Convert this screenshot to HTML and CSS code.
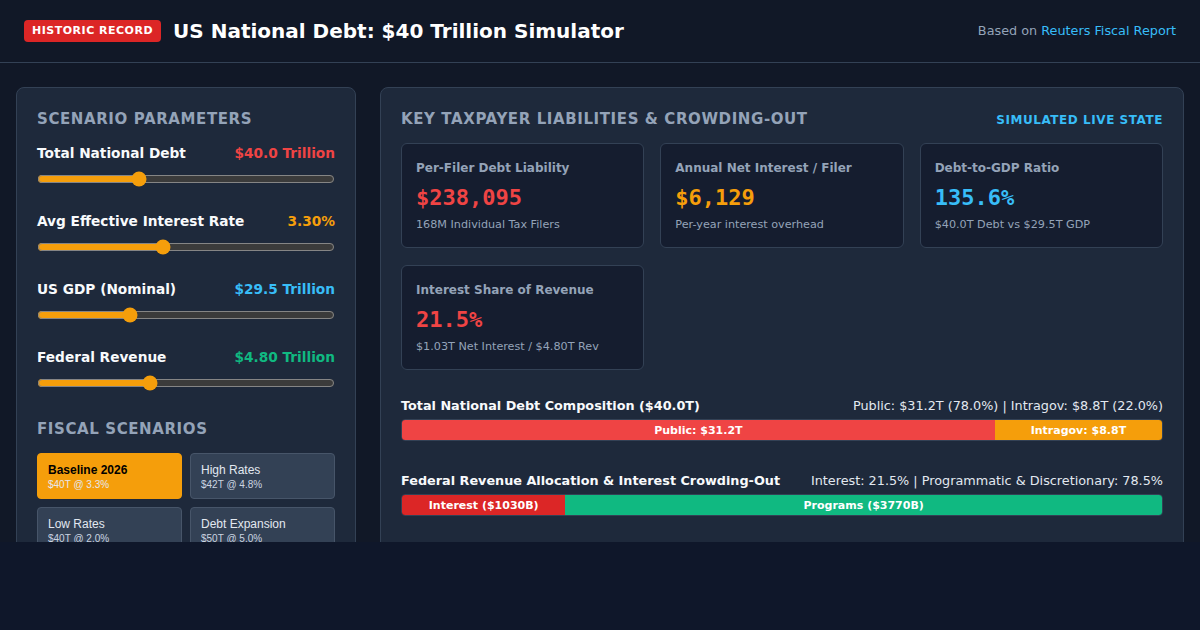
FILE: index.html
```html
<!DOCTYPE html>
<html lang="en">
<head>
    <meta charset="UTF-8">
    <meta name="viewport" content="width=device-width, initial-scale=1.0">
    <title>US National Debt: $40 Trillion Simulator</title>
    <link rel="stylesheet" href="styles.css">
</head>
<body>
<div class="app">
    <header class="topbar">
        <div class="brand">
            <span class="badge">HISTORIC RECORD</span>
            <h1>US National Debt: $40 Trillion Simulator</h1>
        </div>
        <div class="source">Based on <a href="#">Reuters Fiscal Report</a></div>
    </header>

    <main class="layout">
        <section class="panel controls">
            <h2 class="panel-title">Scenario Parameters</h2>

            <div class="control">
                <div class="control-head">
                    <label for="debt">Total National Debt</label>
                    <span class="val red">$40.0 Trillion</span>
                </div>
                <input type="range" id="debt" min="10" max="100" step="0.5" value="40">
            </div>

            <div class="control">
                <div class="control-head">
                    <label for="rate">Avg Effective Interest Rate</label>
                    <span class="val orange">3.30%</span>
                </div>
                <input type="range" id="rate" min="1" max="6.5" step="0.05" value="3.3">
            </div>

            <div class="control">
                <div class="control-head">
                    <label for="gdp">US GDP (Nominal)</label>
                    <span class="val blue">$29.5 Trillion</span>
                </div>
                <input type="range" id="gdp" min="20" max="51.5" step="0.5" value="29.5">
            </div>

            <div class="control">
                <div class="control-head">
                    <label for="rev">Federal Revenue</label>
                    <span class="val green">$4.80 Trillion</span>
                </div>
                <input type="range" id="rev" min="2" max="9.5" step="0.05" value="4.8">
            </div>

            <h2 class="panel-title scenarios-title">Fiscal Scenarios</h2>
            <div class="scenarios">
                <button class="scenario active"><strong>Baseline 2026</strong><small>$40T @ 3.3%</small></button>
                <button class="scenario"><strong>High Rates</strong><small>$42T @ 4.8%</small></button>
                <button class="scenario"><strong>Low Rates</strong><small>$40T @ 2.0%</small></button>
                <button class="scenario"><strong>Debt Expansion</strong><small>$50T @ 5.0%</small></button>
            </div>
        </section>

        <section class="panel results">
            <div class="results-head">
                <h2 class="panel-title">Key Taxpayer Liabilities &amp; Crowding-Out</h2>
                <span class="live">Simulated Live State</span>
            </div>

            <div class="cards">
                <div class="card">
                    <div class="card-title">Per-Filer Debt Liability</div>
                    <div class="card-value red">$238,095</div>
                    <div class="card-sub">168M Individual Tax Filers</div>
                </div>
                <div class="card">
                    <div class="card-title">Annual Net Interest / Filer</div>
                    <div class="card-value orange">$6,129</div>
                    <div class="card-sub">Per-year interest overhead</div>
                </div>
                <div class="card">
                    <div class="card-title">Debt-to-GDP Ratio</div>
                    <div class="card-value blue">135.6%</div>
                    <div class="card-sub">$40.0T Debt vs $29.5T GDP</div>
                </div>
                <div class="card">
                    <div class="card-title">Interest Share of Revenue</div>
                    <div class="card-value red">21.5%</div>
                    <div class="card-sub">$1.03T Net Interest / $4.80T Rev</div>
                </div>
            </div>

            <div class="breakdown">
                <div class="breakdown-head">
                    <span class="breakdown-title">Total National Debt Composition ($40.0T)</span>
                    <span class="breakdown-note">Public: $31.2T (78.0%) | Intragov: $8.8T (22.0%)</span>
                </div>
                <div class="bar">
                    <div class="seg seg-public" style="width: 78%">Public: $31.2T</div>
                    <div class="seg seg-intra" style="width: 22%">Intragov: $8.8T</div>
                </div>
            </div>

            <div class="breakdown">
                <div class="breakdown-head">
                    <span class="breakdown-title">Federal Revenue Allocation &amp; Interest Crowding-Out</span>
                    <span class="breakdown-note">Interest: 21.5% | Programmatic &amp; Discretionary: 78.5%</span>
                </div>
                <div class="bar">
                    <div class="seg seg-interest" style="width: 21.5%">Interest ($1030B)</div>
                    <div class="seg seg-programs" style="width: 78.5%">Programs ($3770B)</div>
                </div>
            </div>
        </section>
    </main>
</div>
</body>
</html>
```

FILE: styles.css
```css
* {
    box-sizing: border-box;
}
body {
    margin: 0;
    background-color: #0f172a;
    color: #f1f5f9;
    font-family: "DejaVu Sans", sans-serif;
    color-scheme: dark;
}
.app {
    height: 542px;
    overflow: hidden;
    background-color: #111827;
}
.topbar {
    height: 63px;
    padding: 0 24px;
    display: flex;
    align-items: center;
    justify-content: space-between;
    border-bottom: 1px solid #334155;
}
.brand {
    display: flex;
    align-items: center;
    gap: 12px;
}
.badge {
    background-color: #dc2626;
    color: #fff;
    font-size: 11px;
    font-weight: bold;
    letter-spacing: 0.5px;
    padding: 4px 8px;
    border-radius: 4px;
    line-height: 14px;
}
h1 {
    margin: 0;
    font-size: 20px;
    font-weight: bold;
    color: #fff;
}
.source {
    font-size: 12.8px;
    color: #94a3b8;
    margin-bottom: 2px;
}
.source a {
    color: #38bdf8;
    text-decoration: none;
}
.layout {
    display: grid;
    grid-template-columns: 340px 1fr;
    gap: 24px;
    padding: 24px 16px;
    align-items: start;
}
.panel {
    background-color: #1e293b;
    border: 1px solid #334155;
    border-radius: 8px;
    padding: 21px 20px 20px;
    min-height: 520px;
}
.panel-title {
    margin: 0 0 16px;
    font-size: 15px;
    line-height: 20px;
    font-weight: bold;
    color: #94a3b8;
    text-transform: uppercase;
    letter-spacing: 0.6px;
}
.control {
    margin-bottom: 26px;
}
.control-head {
    display: flex;
    justify-content: space-between;
    align-items: baseline;
    font-size: 13.7px;
    line-height: 17px;
    font-weight: bold;
    margin-bottom: 9px;
}
.control-head label {
    color: #f8fafc;
}
input[type="range"] {
    display: block;
    width: 100%;
    margin: 0;
    accent-color: #f59e0b;
}
.red { color: #ef4444; }
.orange { color: #f59e0b; }
.blue { color: #38bdf8; }
.green { color: #10b981; }
.scenarios-title {
    margin-top: 28px;
    margin-bottom: 14px;
}
.scenarios {
    display: grid;
    grid-template-columns: 1fr 1fr;
    gap: 8px;
}
.scenario {
    display: flex;
    flex-direction: column;
    align-items: flex-start;
    gap: 2px;
    height: 46px;
    padding: 9px 10px;
    background-color: #334155;
    border: 1px solid #475569;
    border-radius: 4px;
    color: #e2e8f0;
    font-family: "Liberation Sans", Arial, sans-serif;
    text-align: left;
    cursor: pointer;
}
.scenario strong {
    font-size: 12px;
    font-weight: normal;
}
.scenario small {
    font-size: 10px;
    color: #cbd5e1;
}
.scenario.active {
    background-color: #f59e0b;
    border-color: #f59e0b;
    color: #000;
}
.scenario.active strong {
    font-weight: bold;
}
.scenario.active small {
    color: #e5e7eb;
}
.results-head {
    display: flex;
    justify-content: space-between;
    align-items: baseline;
}
.results-head .panel-title {
    margin-bottom: 14px;
}
.live {
    font-size: 12px;
    font-weight: bold;
    letter-spacing: 0.55px;
    color: #38bdf8;
    text-transform: uppercase;
}
.cards {
    display: grid;
    grid-template-columns: repeat(3, 1fr);
    gap: 17px 16px;
    margin-bottom: 28px;
}
.card {
    background-color: #151d2f;
    border: 1px solid #334155;
    border-radius: 6px;
    padding: 17px 14px 15px;
}
.card-title {
    font-size: 12px;
    line-height: 15px;
    font-weight: bold;
    color: #94a3b8;
}
.card-value {
    margin-top: 9px;
    font-family: "DejaVu Sans Mono", monospace;
    font-size: 22px;
    line-height: 26px;
    font-weight: bold;
}
.card-sub {
    margin-top: 7px;
    font-size: 11.2px;
    line-height: 14px;
    color: #94a3b8;
}
.breakdown {
    margin-bottom: 32px;
}
.breakdown-head {
    display: flex;
    justify-content: space-between;
    align-items: baseline;
    font-size: 12.8px;
    line-height: 16px;
    margin-bottom: 5px;
}
.breakdown-title {
    font-weight: bold;
    color: #f8fafc;
}
.breakdown-note {
    color: #e2e8f0;
}
.bar {
    display: flex;
    height: 22px;
    border: 1px solid #334155;
    border-radius: 4px;
    overflow: hidden;
    background-color: #0f172a;
}
.seg {
    display: flex;
    align-items: center;
    justify-content: center;
    font-size: 11px;
    font-weight: bold;
    color: #fff;
    white-space: nowrap;
}
.seg-public { background-color: #ef4444; }
.seg-intra { background-color: #f59e0b; }
.seg-interest { background-color: #dc2626; }
.seg-programs { background-color: #10b981; }
```
